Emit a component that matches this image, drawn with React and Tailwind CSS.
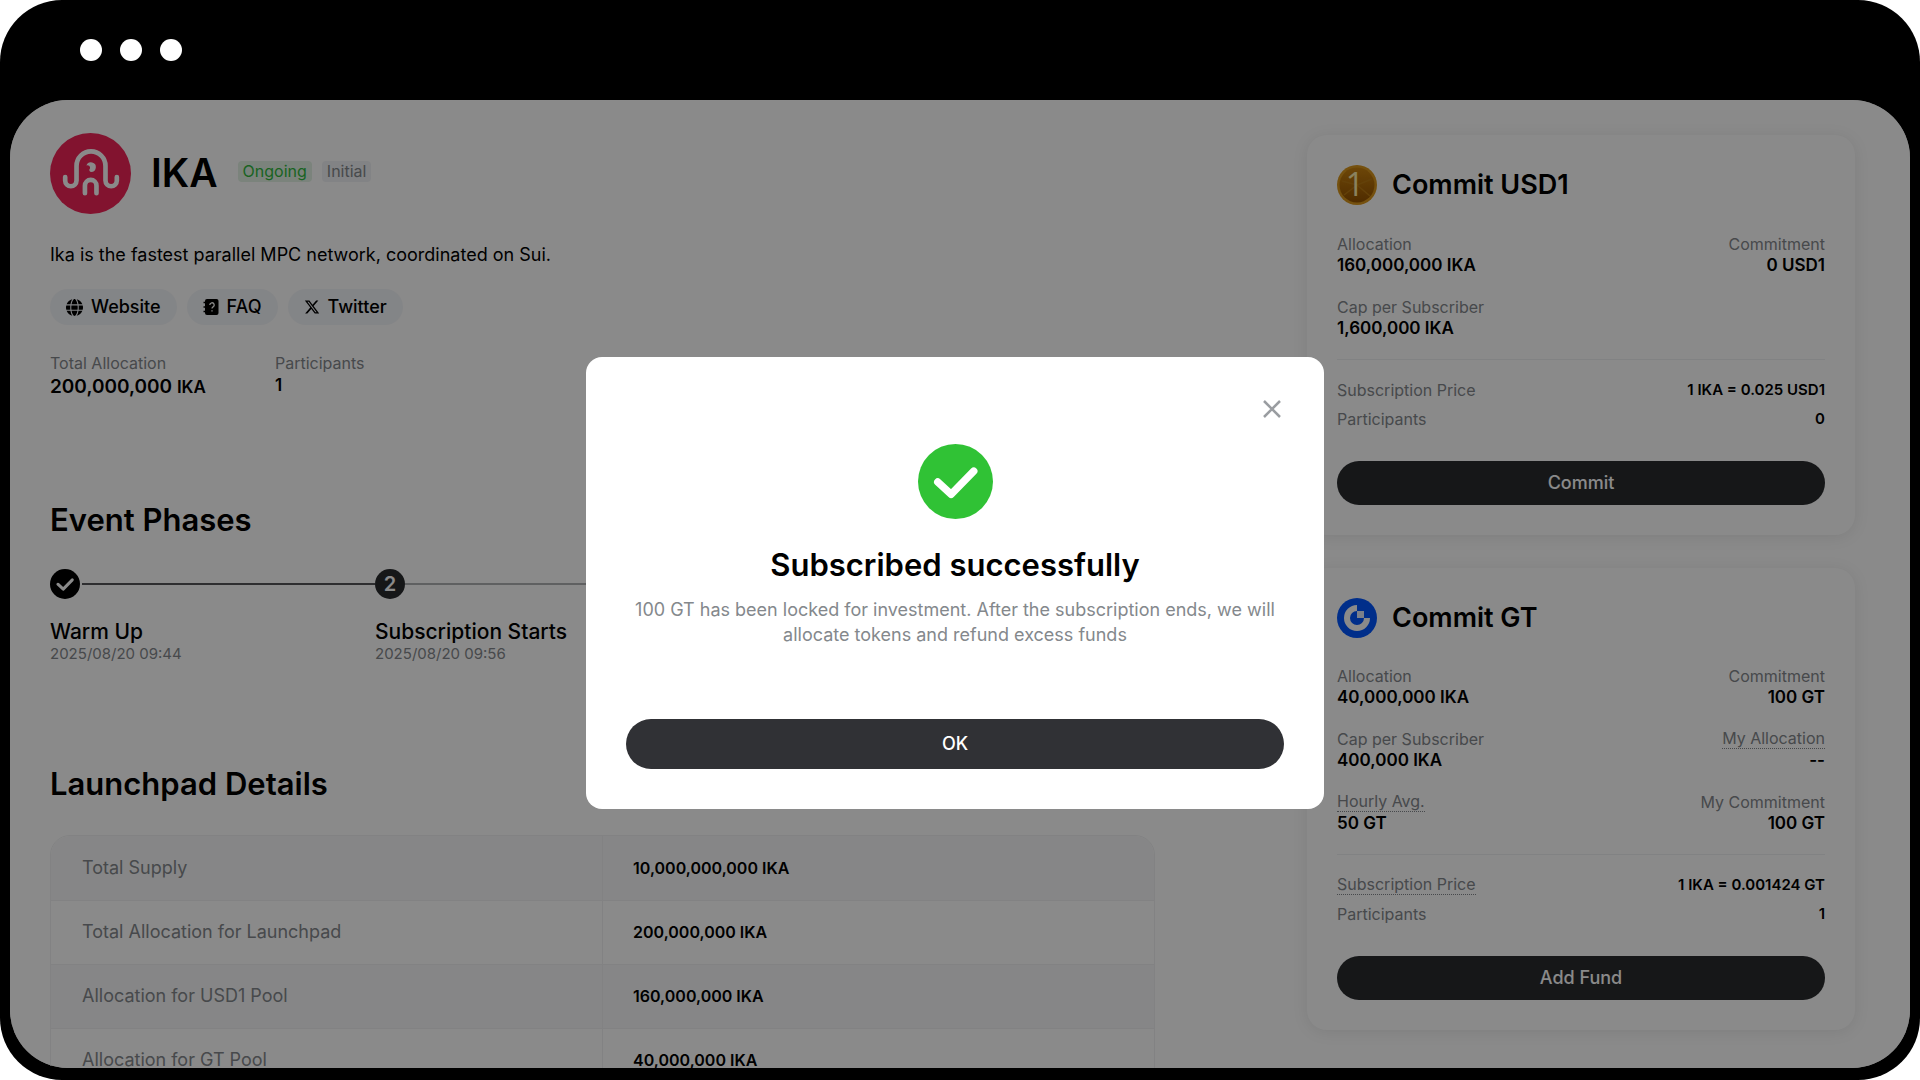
import React, { useState } from "react";
import { FaGlobe, FaXTwitter } from "react-icons/fa6";

const details = [
  { label: "Total Supply", value: "10,000,000,000 IKA" },
  { label: "Total Allocation for Launchpad", value: "200,000,000 IKA" },
  { label: "Allocation for USD1 Pool", value: "160,000,000 IKA" },
  { label: "Allocation for GT Pool", value: "40,000,000 IKA" },
];

const IkaLogo = () => (
  <svg viewBox="0 0 80 80" className="size-[81px] shrink-0" aria-hidden="true">
    <circle cx="40" cy="40" r="40" fill="#f02458" />
    <g fill="none" stroke="#fff" strokeWidth="4.6" strokeLinecap="round">
      <path d="M15 43.5V47a5.6 5.6 0 0 0 11.2 0V32.5a14.3 14.3 0 0 1 28.6 0V47a5.6 5.6 0 0 0 11.2 0V43.5" />
      <path d="M34.5 59.5V52a5.7 5.7 0 0 1 11.4 0v7.5" />
    </g>
    <path d="M36 32a4.8 4.8 0 1 1 4.5 6.5 2 2 0 0 1-1-3.5 2.6 2.6 0 0 0-3.5-3z" fill="#fff" />
  </svg>
);

const FaqIcon = () => (
  <svg viewBox="0 0 16 18" className="h-[18px] w-4" aria-hidden="true">
    <rect x="2" y="1" width="13.5" height="16" rx="2" />
    <path d="M0.5 4.5h3M0.5 9h3M0.5 13.5h3" stroke="#000" strokeWidth="1.6" />
    <path d="M6.8 7a2.2 2.2 0 1 1 3.3 1.9c-.8.5-1.1.8-1.1 1.7M9 12.2v1.3" fill="none" stroke="#fff" strokeWidth="1.3" />
  </svg>
);

const Usd1Logo = () => (
  <svg viewBox="0 0 40 40" className="size-10" aria-hidden="true">
    <defs>
      <linearGradient id="coin" x1="0" y1="0" x2="0" y2="1">
        <stop offset="0" stopColor="#c9820f" />
        <stop offset="1" stopColor="#935200" />
      </linearGradient>
    </defs>
    <circle cx="20" cy="20" r="20" fill="#d9961c" />
    <circle cx="20" cy="20" r="17.5" fill="url(#coin)" />
    <path d="M20 20 5 16M20 20 7 30M20 20 33 31M20 20 35 14" stroke="#b87812" strokeWidth="1.5" />
    <text x="18" y="31" textAnchor="middle" fontFamily="'Open Sans', sans-serif" fontSize="32" fill="#fff0ae">
      1
    </text>
  </svg>
);

const GtLogo = () => (
  <svg viewBox="0 0 40 40" className="size-10" aria-hidden="true">
    <circle cx="20" cy="20" r="20" fill="#0055ff" />
    <path d="M20 7a13 13 0 1 0 13 13h-6a7 7 0 1 1-7-7z" fill="#fff" />
    <path d="M20 13h7v7h-7z" fill="#e4ecff" />
  </svg>
);

const Check = ({ className }) => (
  <svg viewBox="0 0 76 76" className={className} aria-hidden="true">
    <circle cx="38" cy="38" r="38" fill="currentColor" />
    <path
      d="M20 38.5l13.5 12.5 23-23.5"
      fill="none"
      stroke="#fff"
      strokeWidth="7.5"
      strokeLinecap="round"
      strokeLinejoin="round"
    />
  </svg>
);

const LinkPill = ({ icon, children }) => (
  <a href="#" className="flex h-9 items-center gap-2 rounded-full bg-[#f3f5f9] px-4 text-lg font-medium text-black">
    {icon}
    {children}
  </a>
);

const Label = ({ hint, children }) => (
  <dt className={hint ? "border-b border-dotted border-[#84888c] text-base leading-[19px]" : "text-base leading-5"}>
    {children}
  </dt>
);

const Stat = ({ label, value, hint, right }) => (
  <div className={right ? "flex flex-col items-end text-[#84888c]" : "flex flex-col items-start text-[#84888c]"}>
    <Label hint={hint}>{label}</Label>
    <dd className="text-[17px] leading-[22px] font-semibold text-black">{value}</dd>
  </div>
);

const PoolCard = ({ logo, title, stats, price, participants, priceHint, action }) => (
  <section className="rounded-[20px] bg-white p-[30px] shadow-[0_2px_16px_rgba(0,0,0,0.09)]">
    <div className="flex items-center gap-[15px]">
      {logo}
      <h2 className="text-[27px] font-semibold">{title}</h2>
    </div>
    <dl className="mt-7 grid grid-cols-2 gap-y-[21px]">
      {stats.map((s) => (
        <Stat key={s.label} {...s} />
      ))}
    </dl>
    <hr className="mt-5 border-[#eef0f2]" />
    <dl className="mt-5 flex flex-col gap-[9px] text-[#84888c]">
      <div className="flex justify-between">
        <Label hint={priceHint}>Subscription Price</Label>
        <dd className="text-[15px] leading-5 font-semibold text-black">{price}</dd>
      </div>
      <div className="flex justify-between">
        <Label>Participants</Label>
        <dd className="text-[15px] leading-5 font-semibold text-black">{participants}</dd>
      </div>
    </dl>
    <button className="mt-8 h-11 w-full rounded-full bg-[#292b2e] text-lg font-medium text-white">
      {action}
    </button>
  </section>
);

const SuccessModal = ({ onClose }) => (
  <div className="absolute inset-0 flex items-center justify-center bg-black/46 pr-2.5 pb-0.5">
    <div role="dialog" aria-labelledby="modal-title" className="w-[738px] rounded-2xl bg-white p-10 text-center">
      <div className="flex justify-end">
        <button aria-label="Close" onClick={onClose} className="size-6 text-[#9a9da1]">
          <svg viewBox="0 0 24 24" className="size-6" fill="none" stroke="currentColor" strokeWidth="2.5">
            <path d="M4 4l16 16M20 4L4 20" />
          </svg>
        </button>
      </div>
      <Check className="mx-auto mt-[23px] size-[75px] text-[#30c235]" />
      <h2 id="modal-title" className="mt-7 text-[31px] leading-9 font-semibold">
        Subscribed successfully
      </h2>
      <p className="mt-3.5 text-lg leading-[25px] text-[#84888c]">
        100 GT has been locked for investment. After the subscription ends, we will allocate tokens and refund excess
        funds
      </p>
      <button onClick={onClose} className="mt-[72px] h-[50px] w-full rounded-full bg-[#303135] text-lg font-medium text-white">
        OK
      </button>
    </div>
  </div>
);

const App = () => {
  const [open, setOpen] = useState(true);

  return (
    <div className="h-screen bg-white font-['Inter',sans-serif] text-black">
      <div className="flex h-full flex-col rounded-[62px] bg-black px-2.5 pb-3">
        <div className="flex h-[100px] shrink-0 items-center gap-[18px] pl-[70px]">
          <span className="size-[22px] rounded-full bg-white" />
          <span className="size-[22px] rounded-full bg-white" />
          <span className="size-[22px] rounded-full bg-white" />
        </div>

        <div className="relative min-h-0 flex-1 overflow-hidden rounded-[58px] bg-white">
          <div className="flex gap-[152px] pt-[33px] pr-[55px] pl-10">
            <main className="min-w-0 flex-1">
              <div className="flex items-center">
                <IkaLogo />
                <h1 className="ml-5 text-[39px] font-semibold">IKA</h1>
                <div className="mb-1 ml-5 flex gap-2.5 text-base leading-[21px]">
                  <span className="rounded-sm bg-[#e3f3e5] px-[5px] text-[#30b840]">Ongoing</span>
                  <span className="rounded-sm bg-[#f1f3f6] px-[5px] text-[#84888c]">Initial</span>
                </div>
              </div>
              <p className="mt-[29px] text-lg leading-6">
                Ika is the fastest parallel MPC network, coordinated on Sui.
              </p>
              <nav className="mt-[22px] flex gap-2.5">
                <LinkPill icon={<FaGlobe className="size-[17px]" />}>Website</LinkPill>
                <LinkPill icon={<FaqIcon />}>FAQ</LinkPill>
                <LinkPill icon={<FaXTwitter className="size-4" />}>Twitter</LinkPill>
              </nav>
              <dl className="mt-7 flex">
                <div className="w-[225px]">
                  <dt className="text-base leading-5 text-[#84888c]">Total Allocation</dt>
                  <dd className="text-[19px] leading-7 font-semibold">
                    200,000,000 <span className="text-[17px]">IKA</span>
                  </dd>
                </div>
                <div>
                  <dt className="text-base leading-5 text-[#84888c]">Participants</dt>
                  <dd className="text-[17px] leading-6 font-semibold">1</dd>
                </div>
              </dl>

              <h2 className="mt-[101px] text-[31px] leading-9 font-semibold">Event Phases</h2>
              <ol className="mt-[31px] flex">
                <li className="w-[325px]">
                  <div className="flex items-center gap-0.5">
                    <Check className="size-[30px]" />
                    <span className="h-0.5 flex-1 bg-[#55565a]" />
                  </div>
                  <p className="mt-[19px] text-[21px] leading-7 font-medium">Warm Up</p>
                  <p className="text-[15px] leading-4 text-[#84888c]">2025/08/20 09:44</p>
                </li>
                <li className="flex-1">
                  <div className="flex items-center">
                    <span className="flex size-[30px] items-center justify-center rounded-full bg-[#292b2e] text-xl font-semibold text-white">
                      2
                    </span>
                    <span className="h-0.5 flex-1 bg-[#b0b1b3]" />
                  </div>
                  <p className="mt-[19px] text-[21px] leading-7 font-medium">Subscription Starts</p>
                  <p className="text-[15px] leading-4 text-[#84888c]">2025/08/20 09:56</p>
                </li>
              </ol>

              <h2 className="mt-[104px] text-[31px] leading-9 font-semibold">Launchpad Details</h2>
              <div className="mt-[33px] overflow-hidden rounded-[20px] border border-[#f0f1f2]">
                <table className="w-full table-fixed text-left">
                  <tbody>
                    {details.map((row) => (
                      <tr key={row.label} className="h-16 border-b border-[#f0f1f2] odd:bg-[#f8f8f9]">
                        <th className="border-r border-[#f0f1f2] pl-[31px] text-lg font-normal text-[#84888c]">
                          {row.label}
                        </th>
                        <td className="pl-[30px] text-base font-semibold">{row.value}</td>
                      </tr>
                    ))}
                  </tbody>
                </table>
              </div>
            </main>

            <aside className="flex w-[548px] shrink-0 flex-col gap-[33px] pt-0.5">
              <PoolCard
                logo={<Usd1Logo />}
                title="Commit USD1"
                stats={[
                  { label: "Allocation", value: "160,000,000 IKA" },
                  { label: "Commitment", value: "0 USD1", right: true },
                  { label: "Cap per Subscriber", value: "1,600,000 IKA" },
                ]}
                price="1 IKA = 0.025 USD1"
                participants="0"
                action="Commit"
              />
              <PoolCard
                logo={<GtLogo />}
                title="Commit GT"
                stats={[
                  { label: "Allocation", value: "40,000,000 IKA" },
                  { label: "Commitment", value: "100 GT", right: true },
                  { label: "Cap per Subscriber", value: "400,000 IKA" },
                  { label: "My Allocation", value: "--", hint: true, right: true },
                  { label: "Hourly Avg.", value: "50 GT", hint: true },
                  { label: "My Commitment", value: "100 GT", right: true },
                ]}
                price="1 IKA = 0.001424 GT"
                priceHint
                participants="1"
                action="Add Fund"
              />
            </aside>
          </div>

          {open && <SuccessModal onClose={() => setOpen(false)} />}
        </div>
      </div>
    </div>
  );
};

export default App;
